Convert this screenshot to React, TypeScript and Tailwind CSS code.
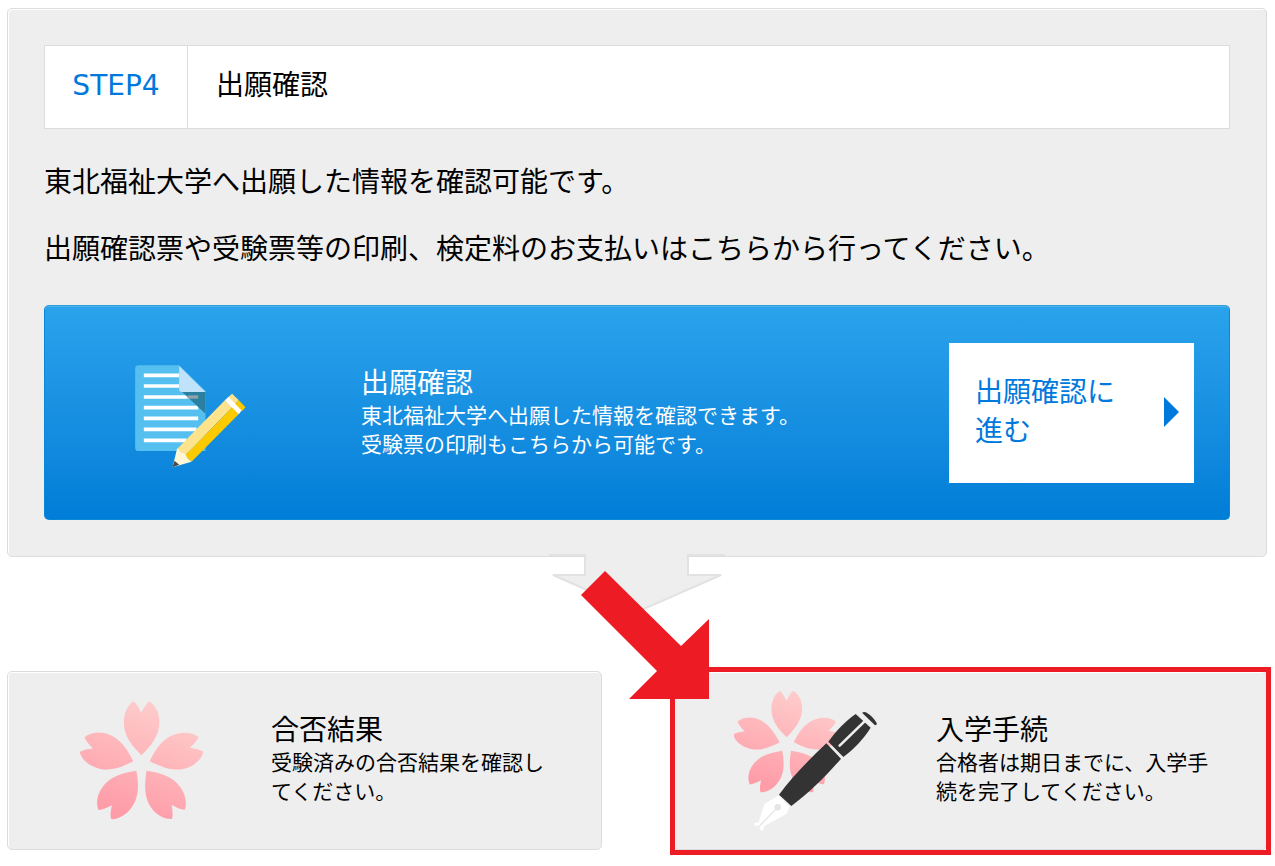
import { useId } from "react";
import type { ReactNode } from "react";
import clsx from "clsx";

const PETAL =
  "M243 195 C215 168 189 137 190 95 C190 65 204 42 219 33 C229 40 236 54 242 68 C249 54 257 40 266 33 C285 44 297 68 297 95 C297 137 270 168 243 195 Z";

function Petals() {
  const id = useId();

  return (
    <>
      <defs>
        <clipPath id={`${id}-petals`}>
          {[0, 72, 144, 216, 288].map((angle) => (
            <path key={angle} d={PETAL} transform={`rotate(${angle} 243 221)`} />
          ))}
        </clipPath>
        <linearGradient
          id={`${id}-pink`}
          gradientUnits="userSpaceOnUse"
          x1="300"
          y1="60"
          x2="190"
          y2="370"
        >
          <stop offset="0" stopColor="#fecbca" />
          <stop offset="1" stopColor="#fe9ca8" />
        </linearGradient>
      </defs>
      <rect
        x="40"
        y="20"
        width="410"
        height="390"
        fill={`url(#${id}-pink)`}
        clipPath={`url(#${id}-petals)`}
      />
    </>
  );
}

function SakuraIcon() {
  return (
    <svg className="h-[121px] w-[125px]" viewBox="55 30 376 362" aria-hidden="true">
      <Petals />
    </svg>
  );
}

function SakuraPenIcon() {
  return (
    <svg className="h-[142px] w-[144px]" viewBox="40 28 432 426" aria-hidden="true">
      <g transform="translate(198 192) scale(0.86) translate(-243 -221)">
        <Petals />
      </g>
      <path
        d="M174 344 L206 378 L197 400 L130 437 L127 450 L117 447 L118 441 L109 434 L102 436 L100 429 L106 425 L113 427 L131 371 Z"
        fill="#fff"
      />
      <path d="M171 380 L114 439" stroke="#e6e6e6" strokeWidth="4" />
      <circle cx="171" cy="380" r="10" fill="#e6e6e6" />
      <g fill="#333">
        <path d="M175 342 C215 288 265 237 317 188 L361 234 C315 288 267 334 212 376 Z" />
        <path d="M323 183 C348 149 374 122 405 100 L450 141 C428 175 402 203 368 229 Z" />
        <path d="M424 96 Q432 92 438 96 Q458 108 468 127 Q470 133 463 134 Z" />
      </g>
      <path d="M357 195 L434 120" stroke="#eee" strokeWidth="8" strokeLinecap="round" />
    </svg>
  );
}

function DocumentIcon() {
  return (
    <svg className="h-[103px] w-[111px]" viewBox="46 44 332 309" aria-hidden="true">
      <path
        d="M56 45 H178 L257 122 V302 H56 Q46 302 46 292 V55 Q46 45 56 45 Z"
        fill="#55c0f0"
      />
      <path
        d="M72 75 H178 M72 107 H178 M72 140 H235 M72 172 H235 M72 204 H235 M72 237 H230 M72 270 H200"
        stroke="#fff"
        strokeWidth="11"
      />
      <path d="M187 125 H257 V190 Z" fill="#2b7f9f" />
      <path d="M203 140 H235" stroke="#8fa3ac" strokeWidth="10" />
      <path d="M178 47 L257 125 H186 Q178 125 178 117 Z" fill="#c0e2fa" />
      <path d="M172 296 L315 150 L338 170 L195 316 Z" fill="#fce38c" />
      <path d="M195 316 L338 170 L357 191 L215 334 Z" fill="#fbcb00" />
      <path d="M172 294 L184 306 L196 311 L202 322 L215 334 L158 351 Z" fill="#fff6d6" />
      <path d="M164 331 L178 343 L158 351 Z" fill="#4a4a4a" />
      <path d="M315 150 L328 138 L367 178 L357 192 Z" fill="#fff" />
      <path d="M326 140 L337 130 L357 150 L346 160 Z" fill="#fce38c" />
      <path d="M346 160 L357 150 L377 171 L367 182 Z" fill="#f9c802" />
    </svg>
  );
}

function StepArrow() {
  return (
    <svg
      className="relative -mt-[3px] h-[62px] w-[176px]"
      viewBox="0 0 176 62"
      aria-hidden="true"
    >
      <path d="M0 0 H176 V2 H140 V21 H174 L88 58 L2 21 H36 V2 H0 Z" fill="#eee" />
      <path
        d="M0 1 H36 V21 H4 L88 58 L172 21 H139 V1 H176"
        fill="none"
        stroke="#e2e2e2"
        strokeWidth="2"
      />
    </svg>
  );
}

// Red frame and arrow that point the reader to one menu card.
function Callout() {
  return (
    <>
      <div className="pointer-events-none absolute -top-1 -right-1 -bottom-[5px] -left-0.5 border-[5px] border-[#ed1c24]" />
      <svg
        className="pointer-events-none absolute -top-[100px] -left-[91px] h-32 w-32"
        viewBox="0 0 128 128"
        fill="#ed1c24"
        aria-hidden="true"
      >
        <path d="M24 0 L100 75 L128 48 V128 H48 L76 100 L0 24 Z" />
      </svg>
    </>
  );
}

interface MenuCardProps {
  title: string;
  description: string;
  icon: ReactNode;
  highlighted?: boolean;
}

function MenuCard({ title, description, icon, highlighted }: MenuCardProps) {
  return (
    <div className={clsx("flex", highlighted && "relative")}>
      <a
        href="#"
        className="flex min-h-[179px] flex-1 items-center rounded-[5px] border border-[#dcdcdc] bg-[#eee] pr-12 pl-9 shadow-[inset_1px_1px_0_#fff]"
      >
        <div className="flex w-[194px] shrink-0 justify-center">{icon}</div>
        <div className="ml-[33px] flex-1 pb-2">
          <h2 className="text-[28px] leading-[38px]">{title}</h2>
          <p className="text-[21px] leading-[29px]">{description}</p>
        </div>
      </a>
      {highlighted && <Callout />}
    </div>
  );
}

export default function App() {
  return (
    <main className="bg-white py-2 pr-2 pl-[7px] font-['Noto_Sans_CJK_JP',sans-serif] text-black">
      <section className="rounded-[5px] border border-[#dcdcdc] bg-[#eee] p-9 shadow-[inset_1px_1px_0_#fff]">
        <div className="flex h-[84px] items-stretch border border-[#dcdcdc] bg-white text-[28px]">
          <div className="flex w-[143px] items-center justify-center border-r border-[#dcdcdc] pb-0.5 font-['DejaVu_Sans',sans-serif] text-[#0079dc]">
            STEP4
          </div>
          <h1 className="flex items-center px-7 pb-2">出願確認</h1>
        </div>

        <div className="mt-8 space-y-7 text-[28px] leading-[39px]">
          <p>東北福祉大学へ出願した情報を確認可能です。</p>
          <p>出願確認票や受験票等の印刷、検定料のお支払いはこちらから行ってください。</p>
        </div>

        <div className="mt-[38px] flex items-center rounded-[5px] border border-[#0b87d8] border-t-[#2c9fd6] bg-linear-to-b from-[#2aa3ec] to-[#007dd7] px-[35px] pt-[37px] pb-9 text-white shadow-[inset_0_1px_0_#4db2f0]">
          <div className="mt-1.5 flex w-[221px] shrink-0 justify-center">
            <DocumentIcon />
          </div>
          <div className="ml-[60px] flex-1 pb-1.5">
            <h2 className="text-[28px] leading-[38px]">出願確認</h2>
            <p className="text-[21px] leading-[29px]">
              東北福祉大学へ出願した情報を確認できます。
              <br />
              受験票の印刷もこちらから可能です。
            </p>
          </div>
          <a
            href="#"
            className="flex min-h-[140px] w-[245px] shrink-0 items-center justify-between bg-white pr-[15px] pb-0.5 pl-[26px] text-[28px] leading-[39px] text-[#0079dc]"
          >
            <span className="w-[150px] pb-1">出願確認に進む</span>
            <svg className="h-[30px] w-[15px]" viewBox="0 0 15 30" fill="#0079dc" aria-hidden="true">
              <path d="M0 0 L15 15 L0 30 Z" />
            </svg>
          </a>
        </div>
      </section>

      <div className="flex h-[114px] justify-center">
        <StepArrow />
      </div>

      <div className="grid grid-cols-2 gap-[70px]">
        <MenuCard
          title="合否結果"
          description="受験済みの合否結果を確認してください。"
          icon={<SakuraIcon />}
        />
        <MenuCard
          title="入学手続"
          description="合格者は期日までに、入学手続を完了してください。"
          icon={<SakuraPenIcon />}
          highlighted
        />
      </div>
    </main>
  );
}
